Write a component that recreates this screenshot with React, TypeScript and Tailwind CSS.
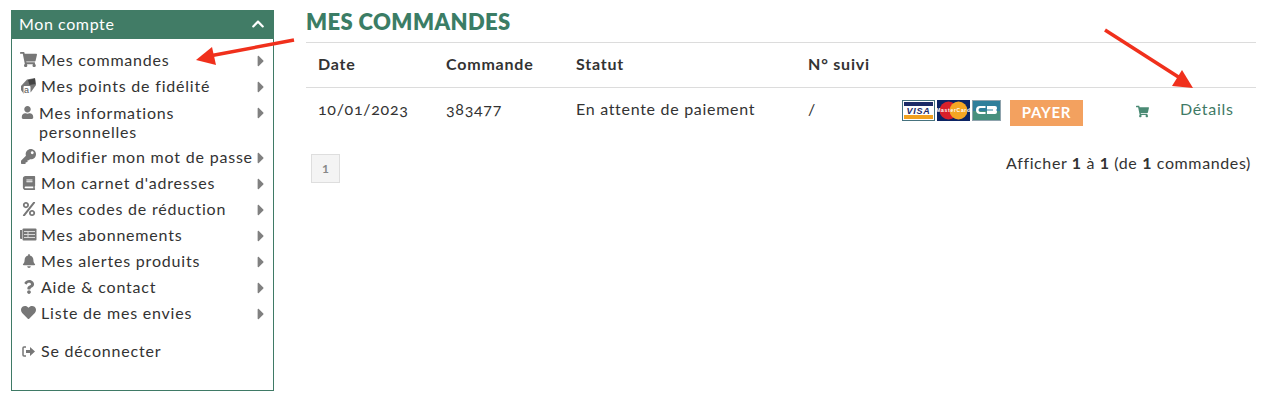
import React from "react";
import { FaShoppingCart, FaUser, FaKey, FaBook, FaPercent, FaBell, FaQuestion, FaHeart, FaCaretRight, FaChevronUp } from "react-icons/fa";

const PointsIcon = () => (
  <svg width="17" height="17" viewBox="0 0 17 17">
    <path d="M1 9 7 2.500 15 1 16 8 11 15 7 16.500H3.500L1 13z" fill="#777" />
    <path d="M8 3 15 1.500 15.500 7 9.500 8z" fill="#444" />
    <rect x="3.500" y="9" width="7" height="8" rx="1" fill="#fff" />
    <text x="7" y="15.500" textAnchor="middle" fontSize="9" fill="#555" fontFamily="Liberation Sans">a</text>
  </svg>
);

const NewsIcon = () => (
  <svg width="17" height="13" viewBox="0 0 17 13">
    <path d="M0 2h2v9H1a1 1 0 0 1-1-1z" fill="#777" />
    <rect x="2.500" y="0.500" width="14" height="12" rx="1" fill="#777" />
    <path d="M4 3.500h11M4 6.500h11M4 9.500h11M8 3.500v6" stroke="#d8d8d8" strokeWidth="1" />
  </svg>
);

const LogoutIcon = () => (
  <svg width="13" height="11" viewBox="0 0 13 11">
    <path d="M4 1H2a1 1 0 0 0-1 1v7a1 1 0 0 0 1 1h2" fill="none" stroke="#777" strokeWidth="1.500" />
    <path d="M4 4h4V1l5 4.500-5 4.500V7H4z" fill="#777" />
  </svg>
);

const menuItems = [
  { label: "Mes commandes", icon: <FaShoppingCart size={17} /> },
  { label: "Mes points de fidélité", icon: <PointsIcon /> },
  { label: "Mes informations personnelles", icon: <FaUser size={13} />, narrow: true },
  { label: "Modifier mon mot de passe", icon: <FaKey size={15} /> },
  { label: "Mon carnet d'adresses", icon: <FaBook size={14} /> },
  { label: "Mes codes de réduction", icon: <FaPercent size={14} /> },
  { label: "Mes abonnements", icon: <NewsIcon /> },
  { label: "Mes alertes produits", icon: <FaBell size={14} /> },
  { label: "Aide & contact", icon: <FaQuestion size={14} /> },
  { label: "Liste de mes envies", icon: <FaHeart size={15} /> },
];

const Cards = () => (
  <div className="flex items-center gap-[2px]">
    <svg width="33" height="21" viewBox="0 0 33 21">
      <rect x="0.5" y="0.5" width="32" height="20" fill="#fff" stroke="#46727e" />
      <rect x="2" y="2" width="29" height="4" fill="#1b2a66" />
      <rect x="2" y="15" width="29" height="4" fill="#f2a11d" />
      <text x="16.500" y="14" textAnchor="middle" fontSize="9" fontWeight="700" fontStyle="italic" fill="#1b2a66" fontFamily="Liberation Sans">VISA</text>
    </svg>
    <svg width="33" height="21" viewBox="0 0 33 21">
      <rect width="33" height="21" fill="#0c2464" />
      <circle cx="11.500" cy="10.500" r="9" fill="#d8202a" />
      <circle cx="21.500" cy="10.500" r="9" fill="#f5a623" />
      <text x="16.500" y="12" textAnchor="middle" fontSize="5" fontWeight="700" fill="#fff" fontFamily="Liberation Sans">MasterCard</text>
    </svg>
    <svg width="29" height="21" viewBox="0 0 29 21">
      <rect width="29" height="21" fill="#2f7f9b" />
      <rect y="11" width="29" height="10" fill="#46907e" />
      <rect x="0.500" y="0.500" width="28" height="20" fill="none" stroke="#8fa3ad" />
      <path d="M13.500 6H8a4 4 0 0 0 0 8h5.500v-2H8.500a2 2 0 0 1 0-4h5z" fill="#fff" />
      <path d="M15 6h8a2 2 0 0 1 2 2 2 2 0 0 1-1 2 2 2 0 0 1 1 2 2 2 0 0 1-2 2h-8v-3.500h6v-1h-6z" fill="#fff" />
    </svg>
  </div>
);

export default function App() {
  return (
    <div className="relative flex h-[404px] w-[1263px] gap-8 overflow-hidden bg-white pl-[11px] pr-[7px] pt-[10px] text-[16px] text-[#333] [font-family:Lato,'Liberation_Sans',sans-serif]">
      <aside className="flex h-[381px] w-[263px] shrink-0 flex-col border border-t-0 border-[#3f7a66]">
        <div className="-mx-px flex h-[29px] shrink-0 items-center justify-between bg-[#417c66] pb-[2px] pl-2 pr-[9px] tracking-[0.6px] text-white">
          <span>Mon compte</span>
          <FaChevronUp size={14} />
        </div>
        <ul className="mt-[9px] leading-[19px] tracking-[0.8px]">
          {menuItems.map((item) => (
            <li key={item.label} className={`relative flex items-start pl-2 pr-[18px] ${item.narrow ? "h-[45px] py-[3px]" : "h-[26px] py-[2px]"}`}>
              <span className={`mr-1 flex h-[19px] shrink-0 items-center justify-center text-[#777] ${item.narrow ? "w-[15px]" : "w-[17px]"}`}>{item.icon}</span>
              <span>{item.label}</span>
              <FaCaretRight size={18} className="absolute right-[3px] top-[4px] text-[#808080]" />
            </li>
          ))}
        </ul>
        <div className="mt-3 flex h-[26px] items-center pb-[2px] pl-2 tracking-[0.8px]">
          <span className="mr-1 flex w-[17px] justify-center"><LogoutIcon /></span>
          <span>Se déconnecter</span>
        </div>
      </aside>

      <main className="min-w-0 flex-1">
        <h1 className="h-[33px] border-b border-[#dcdcdc] text-[22px] font-extrabold leading-[24px] tracking-[0.4px] text-[#3b7d65]">MES COMMANDES</h1>
        <div className="grid h-[45px] grid-cols-[128px_130px_232px_94px] items-center border-b border-[#dcdcdc] pb-[2px] pl-3 font-bold tracking-[0.8px]">
          <span>Date</span>
          <span>Commande</span>
          <span>Statut</span>
          <span>N° suivi</span>
        </div>
        <div className="flex h-[45px] items-center pl-3 tracking-[0.7px]">
          <div className="grid grid-cols-[128px_130px_232px_94px] items-center pb-[4px]">
            <span className="oldstyle-nums">10/01/2023</span>
            <span className="oldstyle-nums">383477</span>
            <span>En attente de paiement</span>
            <span>/</span>
          </div>
          <Cards />
          <button className="ml-[9px] mt-[4px] h-[26px] w-[73px] bg-[#f3a15f] text-[15px] font-bold tracking-[0.7px] text-white">PAYER</button>
          <FaShoppingCart size={13} className="ml-[53px] mt-[2px] text-[#4a8a74]" />
          <a className="ml-[31px] pb-[4px] text-[#3f7a66]">Détails</a>
        </div>
        <div className="mt-[21px] flex items-start justify-between px-[5px]">
          <span className="flex h-[29px] w-[29px] items-center justify-center border border-[#dedede] bg-[#f4f4f4] text-[12px] font-bold text-[#888]">1</span>
          <span className="leading-[18px] tracking-[0.62px]">Afficher <b>1</b> à <b>1</b> (de <b>1</b> commandes)</span>
        </div>
      </main>

      <svg className="pointer-events-none absolute left-0 top-0" width="1263" height="404" viewBox="0 0 1263 404">
        <path d="M294 40 212 55.500" stroke="#f0301c" strokeWidth="3.500" fill="none" />
        <path d="M196 60 212 47 216 65z" fill="#f0301c" />
        <path d="M1105 30 1180 78" stroke="#f0301c" strokeWidth="3.500" fill="none" />
        <path d="M1193 88 1172 86 1182 70z" fill="#f0301c" />
      </svg>
    </div>
  );
}
